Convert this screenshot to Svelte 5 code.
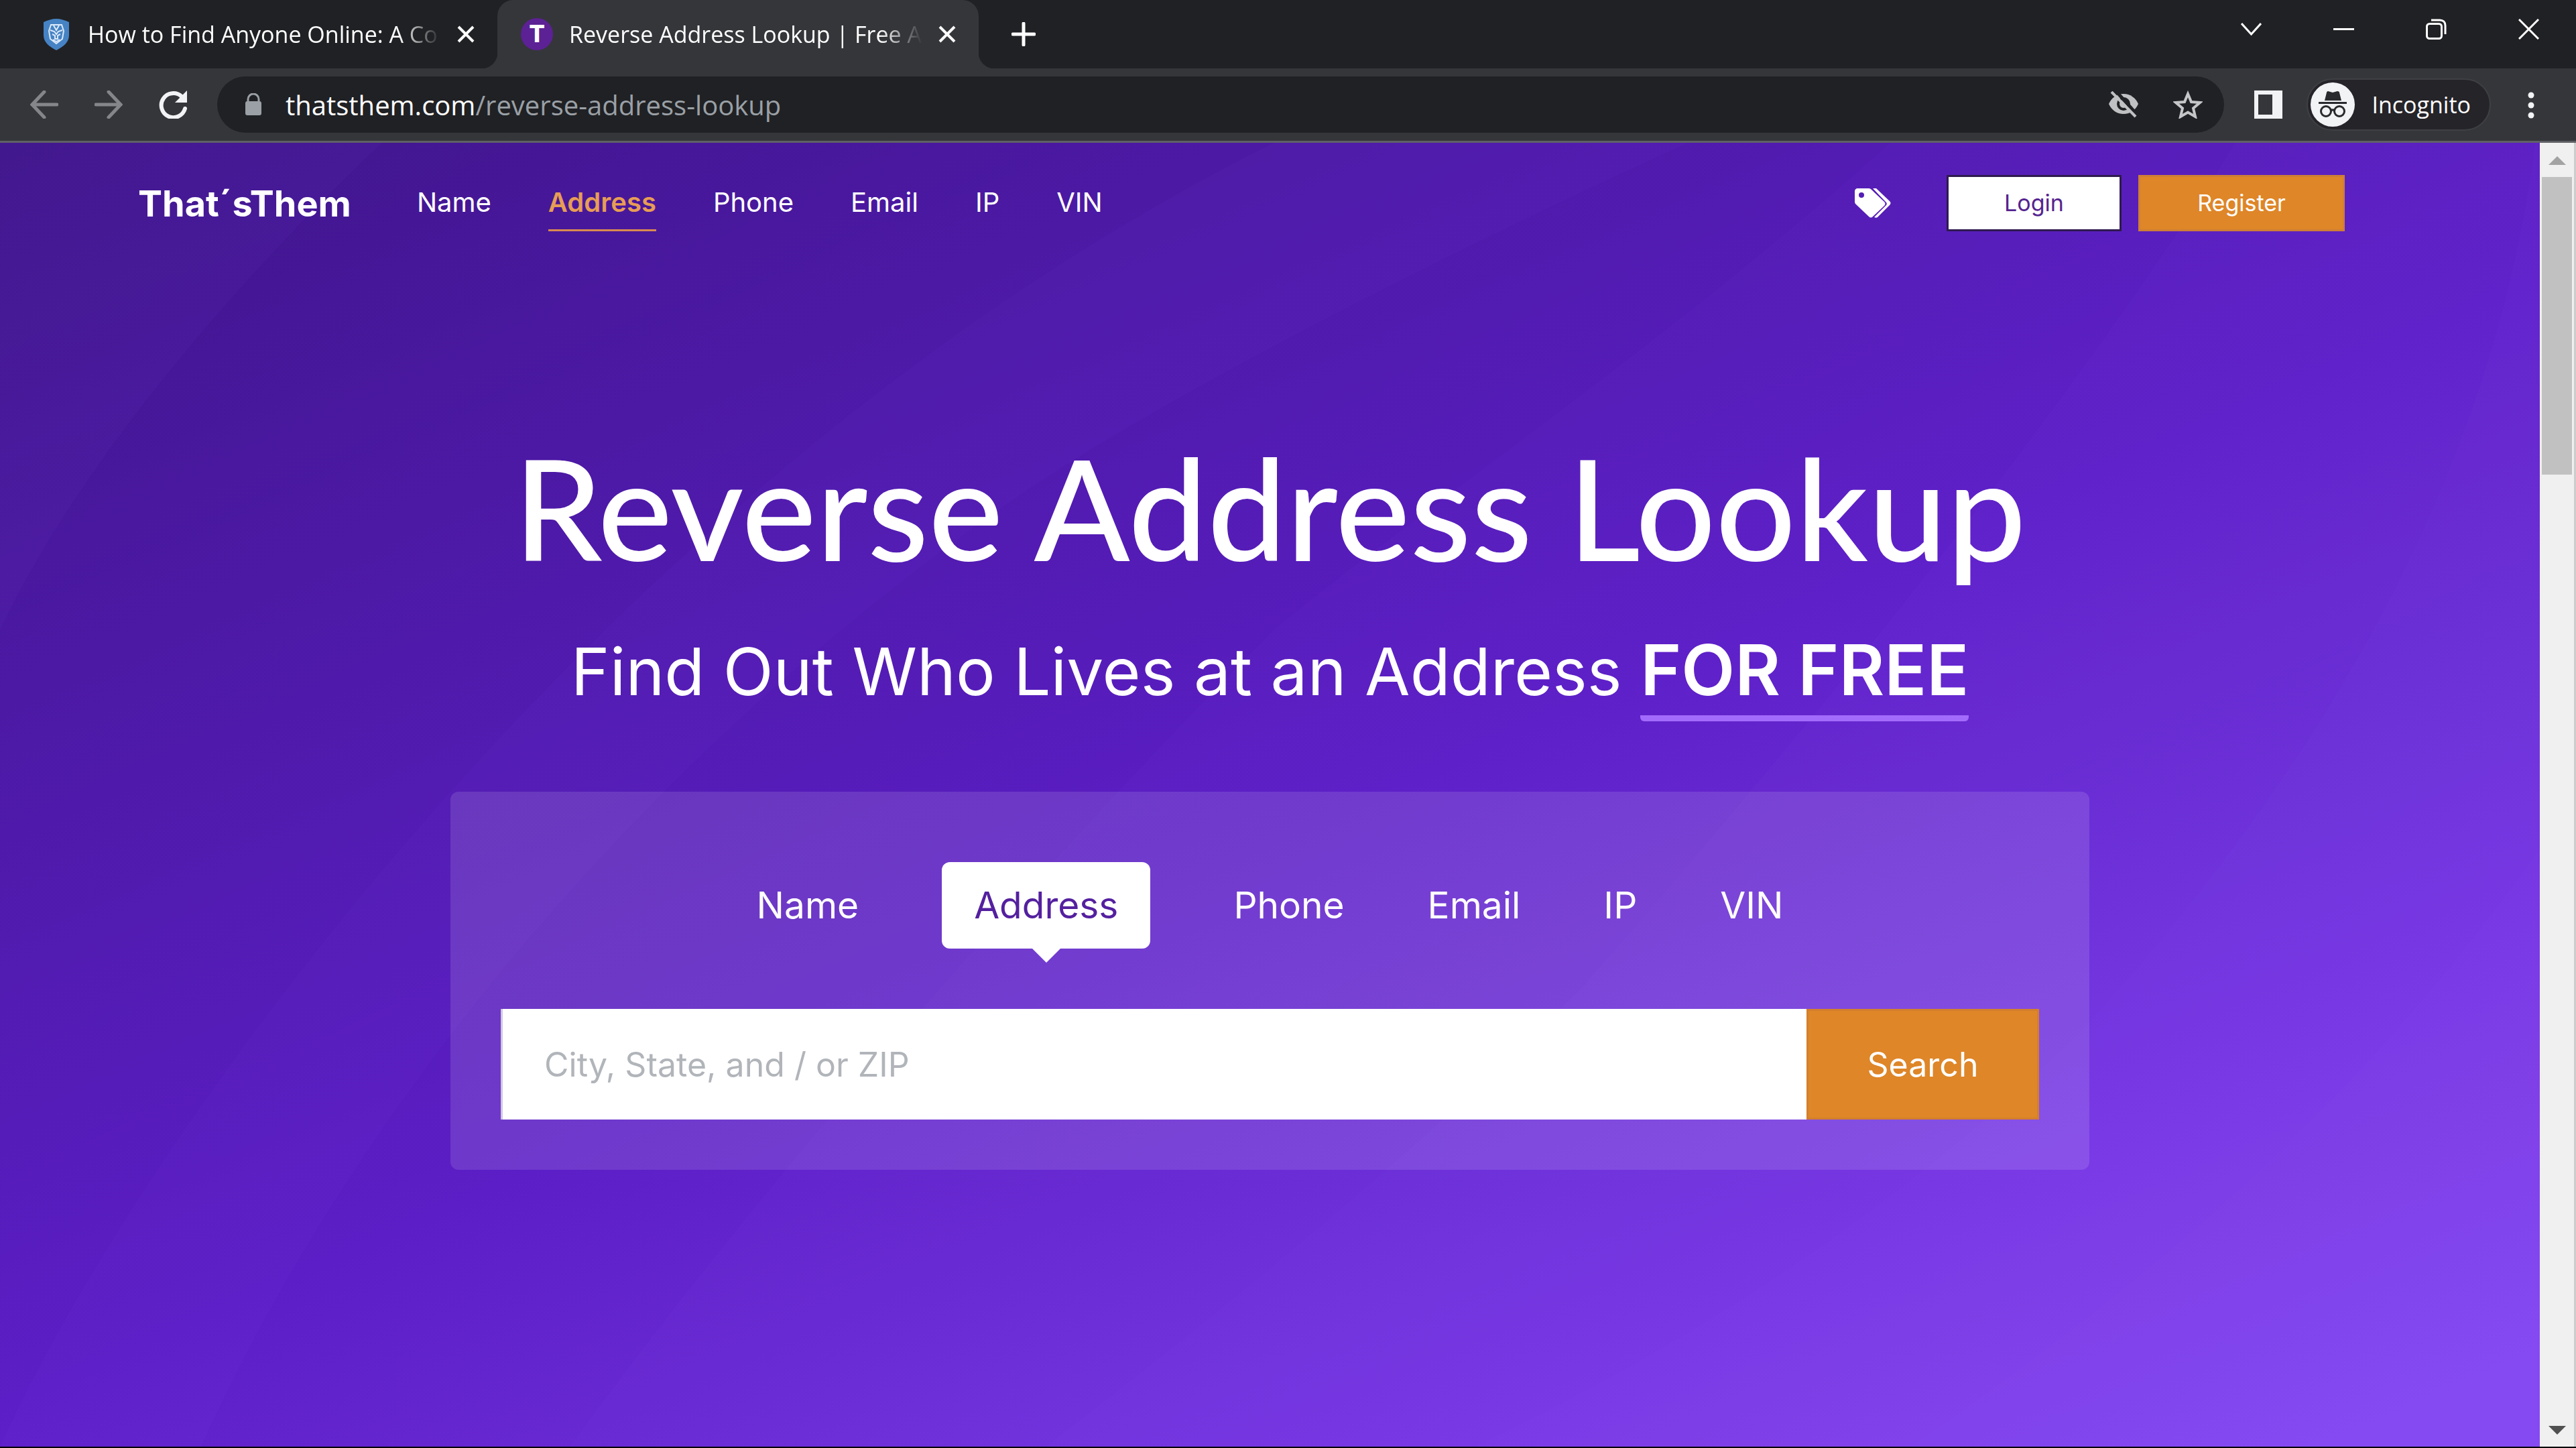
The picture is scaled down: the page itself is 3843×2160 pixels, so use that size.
<script>
  let query = "";

  const links = ["Name", "Address", "Phone", "Email", "IP", "VIN"];
  let current = "Address";
</script>

<style>
  :global(body) {
    margin: 0;
    background: #000;
  }
  button,
  input {
    margin: 0;
    padding: 0;
    border: 0;
    background: none;
    color: inherit;
    font: inherit;
  }
  svg {
    display: block;
    flex: none;
  }
  a {
    color: inherit;
    text-decoration: none;
  }

  .window {
    display: flex;
    flex-direction: column;
    box-sizing: border-box;
    min-height: 100vh;
    padding-bottom: 2px;
    color: #fff;
    font-family: "Open Sans", "Noto Sans", sans-serif;
    font-size: 34px;
  }

  /* tab strip */
  .tab-strip {
    display: flex;
    height: 102px;
    background: #202124;
  }
  .tab {
    display: flex;
    align-items: center;
    box-sizing: border-box;
    width: 718px;
    padding: 0 34px 0 35px;
  }
  .tab.first {
    width: 742px;
    padding-left: 61px;
  }
  .tab.active {
    position: relative;
    border-radius: 24px 24px 0 0;
    background: #35363a;
  }
  .tab.active::before,
  .tab.active::after {
    content: "";
    position: absolute;
    bottom: 0;
    width: 24px;
    height: 24px;
  }
  .tab.active::before {
    right: 100%;
    background: radial-gradient(circle at 0 0, #202124 24px, #35363a 25px);
  }
  .tab.active::after {
    left: 100%;
    background: radial-gradient(circle at 100% 0, #202124 24px, #35363a 25px);
  }
  .tab .title {
    flex: 1;
    margin: 0 24px;
    overflow: hidden;
    white-space: nowrap;
    line-height: 48px;
    mask-image: linear-gradient(to right, #000 88%, transparent);
  }
  .favicon {
    width: 48px;
    height: 48px;
    border-radius: 50%;
    background: #5c2194;
    font-family: Roboto, sans-serif;
    font-size: 36px;
    font-weight: 900;
    line-height: 48px;
    text-align: center;
  }
  .new-tab {
    margin-left: 49px;
  }
  .window-controls {
    display: flex;
    align-items: center;
    gap: 107px;
    margin: 0 55px 15px auto;
  }

  /* toolbar */
  .toolbar {
    display: flex;
    align-items: center;
    height: 108px;
    padding: 0 53px 0 45px;
    border-bottom: 3px solid #5f6065;
    background: #35363a;
  }
  .arrows {
    display: flex;
    gap: 54px;
  }
  .omnibox {
    display: flex;
    flex: 1;
    align-items: center;
    height: 84px;
    margin: 0 45px;
    padding: 0 32px 0 41px;
    border-radius: 42px;
    background: #202124;
    font-size: 40px;
  }
  .omnibox .url {
    flex: 1;
    margin-left: 35px;
    color: #9aa0a6;
  }
  .omnibox .url b {
    color: #fff;
    font-weight: 400;
  }
  .omnibox button + button {
    margin-left: 52px;
  }
  .incognito {
    display: flex;
    align-items: center;
    gap: 25px;
    height: 78px;
    margin: 0 46px 0 36px;
    padding: 0 28px 0 4px;
    border: 2px solid #3f4044;
    border-radius: 42px;
    background: #252429;
  }

  /* page */
  .viewport {
    display: flex;
    flex: 1;
    border-right: 3px solid #cdcdcd;
  }
  .page {
    position: relative;
    flex: 1;
    background: linear-gradient(156deg, #3f158a, #5c1ec6 52%, #8646f3 96%);
    font-family: Inter, "Open Sans", sans-serif;
  }
  .waves {
    position: absolute;
    inset: 0;
    width: 100%;
    height: 100%;
  }
  .site-header {
    position: relative;
    display: flex;
    align-items: center;
    height: 84px;
    padding: 48px 291px 0 206px;
  }
  .logo {
    margin-right: 98px;
    font-size: 54px;
    font-weight: 700;
  }
  .site-nav {
    display: flex;
    flex: 1;
    gap: 85px;
    font-size: 40px;
  }
  .site-nav a {
    line-height: 81px;
    border-bottom: 3px solid transparent;
  }
  .site-nav a.current {
    border-color: #d98a4f;
    color: #e79d55;
    font-weight: 600;
  }
  .btn {
    box-sizing: border-box;
    width: 308px;
    height: 84px;
    border: 3px solid #cf7f35;
    background: #de8628;
    font-size: 34px;
    line-height: 78px;
    text-align: center;
  }
  .btn.login {
    width: 261px;
    margin: 0 25px 0 83px;
    border-color: #2f1a4f;
    background: #fff;
    color: #54248f;
  }

  .hero {
    position: relative;
    padding: 291px 0 0;
    text-align: center;
  }
  h1 {
    margin: 0 0 63px;
    font-family: Lato, sans-serif;
    font-size: 210px;
    font-weight: 500;
    line-height: 240px;
  }
  h2 {
    margin: 0;
    font-size: 98px;
    font-weight: 400;
    line-height: 120px;
  }
  h2 strong {
    display: inline-block;
    padding-bottom: 8px;
    border-bottom: 9px solid #a36bfb;
    border-radius: 0 0 6px 6px;
    font-size: 104px;
    font-weight: 600;
  }
  .panel {
    box-sizing: border-box;
    max-width: 2445px;
    margin: 105px auto 0;
    padding: 105px 75px 75px;
    border-radius: 12px;
    background: rgba(255, 255, 255, 0.12);
  }
  .search-types {
    display: flex;
    justify-content: center;
    gap: 124px;
    font-size: 55px;
    line-height: 129px;
  }
  .search-types .current {
    position: relative;
    padding: 0 48px;
    border-radius: 12px;
    background: #fff;
    color: #54209f;
  }
  .search-types .current::after {
    content: "";
    position: absolute;
    top: 100%;
    left: 50%;
    margin-left: -21px;
    border: 21px solid transparent;
    border-top: 21px solid #fff;
    border-bottom: 0;
  }
  .search {
    display: flex;
    height: 165px;
    margin-top: 90px;
    font-size: 50px;
  }
  .search input {
    flex: 1;
    box-sizing: border-box;
    padding: 0 62px;
    border-left: 3px solid #cfc8e2;
    background: #fff;
    color: #333;
  }
  .search input::placeholder {
    color: #b1b5ba;
    opacity: 1;
  }
  .search button {
    box-sizing: border-box;
    width: 347px;
    border: 3px solid #d37f2c;
    background: #de8628;
  }

  .scrollbar {
    display: flex;
    flex-direction: column;
    align-items: center;
    width: 51px;
    background: #f0f0f0;
  }
  .scrollbar svg {
    margin: 20px 0 18px;
  }
  .scrollbar .thumb {
    width: 45px;
    height: 444px;
    background: #c1c1c1;
  }
  .scrollbar .thumb + svg {
    margin-top: auto;
  }
</style>

<div class="window">
  <div class="tab-strip">
    <div class="tab first">
      <svg width="46" height="48" viewBox="0 0 46 48">
        <path d="M23 1c6 0 13 2 19 5v20c0 10-9 17-19 22C13 43 4 36 4 26V6C10 3 17 1 23 1z" fill="#4683c4" />
        <path d="M15 10h16l3 9-2 12-9 7-9-7-2-12zM14 18l6 2 3 4 3-4 6-2M17 24l4 2v5h4v-5l4-2M19 11l4 7 4-7M18 32l5 3 5-3" fill="none" stroke="#dceafa" stroke-width="2" />
      </svg>
      <span class="title">How to Find Anyone Online: A Co</span>
      <button aria-label="Close tab">
        <svg width="26" height="26" viewBox="0 0 26 26"><path d="M2 2l22 22M24 2L2 24" stroke="#fff" stroke-width="4" /></svg>
      </button>
    </div>
    <div class="tab active">
      <span class="favicon">T</span>
      <span class="title">Reverse Address Lookup | Free A</span>
      <button aria-label="Close tab">
        <svg width="26" height="26" viewBox="0 0 26 26"><path d="M2 2l22 22M24 2L2 24" stroke="#fff" stroke-width="4" /></svg>
      </button>
    </div>
    <button class="new-tab" aria-label="New tab">
      <svg width="36" height="36" viewBox="0 0 36 36"><path d="M18 2v32M2 18h32" stroke="#fff" stroke-width="5" stroke-linecap="round" /></svg>
    </button>
    <div class="window-controls">
      <button aria-label="Search tabs">
        <svg width="31" height="31" viewBox="0 0 31 31"><path d="M1 7l14.5 16L30 7" fill="none" stroke="#fff" stroke-width="3" /></svg>
      </button>
      <button aria-label="Minimize">
        <svg width="31" height="31" viewBox="0 0 31 31"><path d="M0 15.5h31" stroke="#fff" stroke-width="3" /></svg>
      </button>
      <button aria-label="Restore">
        <svg width="31" height="31" viewBox="0 0 31 31" fill="none" stroke="#fff" stroke-width="3">
          <rect x="1.5" y="7.5" width="22" height="22" rx="4" />
          <path d="M8 2h13c5 0 8 3 8 8v13" />
        </svg>
      </button>
      <button aria-label="Close">
        <svg width="31" height="31" viewBox="0 0 31 31"><path d="M1 1l29 29M30 1L1 30" stroke="#fff" stroke-width="3" /></svg>
      </button>
    </div>
  </div>

  <div class="toolbar">
    <div class="arrows">
      <button aria-label="Back">
        <svg width="42" height="42" viewBox="0 0 42 42"><path d="M21 2L3 21l18 19M3 21h37" fill="none" stroke="#85868a" stroke-width="5" stroke-linecap="round" /></svg>
      </button>
      <button aria-label="Forward">
        <svg width="42" height="42" viewBox="0 0 42 42"><path d="M21 2l18 19-18 19M39 21H2" fill="none" stroke="#85868a" stroke-width="5" stroke-linecap="round" /></svg>
      </button>
      <button aria-label="Reload">
        <svg width="42" height="42" viewBox="0 0 42 42">
          <path d="M34 9A18 18 0 1 0 39 27" fill="none" stroke="#f1f3f4" stroke-width="6" stroke-linecap="round" />
          <path d="M42 0v18H24z" fill="#f1f3f4" />
        </svg>
      </button>
    </div>
    <div class="omnibox">
      <svg width="26" height="34" viewBox="0 0 26 34">
        <path d="M5 14V9a8 8 0 0 1 16 0v5" fill="none" stroke="#9aa0a6" stroke-width="3" />
        <rect x="1" y="12" width="24" height="21" rx="3" fill="#9aa0a6" />
      </svg>
      <span class="url"><b>thatsthem.com</b>/reverse-address-lookup</span>
      <button aria-label="Third-party cookies blocked">
        <svg width="44" height="40" viewBox="0 0 44 40">
          <path d="M22 4C12 4 4 10 0 19c4 9 12 15 22 15s18-6 22-15C40 10 32 4 22 4z" fill="#c0c1c3" />
          <circle cx="22" cy="19" r="8" fill="none" stroke="#202124" stroke-width="4" />
          <path d="M9-2l34 38" stroke="#202124" stroke-width="5" />
          <path d="M4 1l36 37" stroke="#c0c1c3" stroke-width="4" />
        </svg>
      </button>
      <button aria-label="Bookmark this tab">
        <svg width="44" height="42" viewBox="0 0 44 42"><path d="M22 5l5 12 13 1-10 8.5 3 12.5-11-6.5L11 39l3-12.5L4 18l13-1z" fill="none" stroke="#c5c6c8" stroke-width="4" /></svg>
      </button>
    </div>
    <button aria-label="Side panel">
      <svg width="42" height="42" viewBox="0 0 42 42"><path fill-rule="evenodd" d="M0 0h42v42H0zM6 6v30h21V6z" fill="#f1f3f4" /></svg>
    </button>
    <button class="incognito">
      <svg width="66" height="66" viewBox="0 0 66 66">
        <circle cx="33" cy="33" r="33" fill="#f1f3f4" />
        <path d="M26 13l7 2 7-2c2 0 3 1 3 2l3 12H21l3-12c0-1 1-2 2-2z" fill="#292a2d" />
        <path d="M12 30.5h42" stroke="#292a2d" stroke-width="3" />
        <g fill="none" stroke="#292a2d" stroke-width="3">
          <circle cx="23" cy="43" r="7.5" />
          <circle cx="43" cy="43" r="7.5" />
          <path d="M30 42c2-1.5 4-1.5 6 0" />
        </g>
      </svg>
      Incognito
    </button>
    <button aria-label="Menu">
      <svg width="28" height="42" viewBox="0 0 28 42" fill="#f1f3f4">
        <circle cx="14" cy="7" r="4.5" />
        <circle cx="14" cy="22" r="4.5" />
        <circle cx="14" cy="37" r="4.5" />
      </svg>
    </button>
  </div>

  <div class="viewport">
    <main class="page">
      <svg class="waves" viewBox="0 0 3789 1945" preserveAspectRatio="none" aria-hidden="true">
        <g fill="#9a6cff" fill-opacity="0.04">
          <path d="M570 0C400 160 130 450 0 727V0z" />
          <path d="M2518 0C2100 190 1700 400 1500 540 900 960 500 1500 300 1945H0C200 1500 900 500 1900 0z" />
          <path d="M3335 0C3150 300 2800 760 2360 1260 2154 1466 1900 1684 1560 1945H3789V0z" />
          <path d="M3782 0C3720 500 3451 950 3100 1330 2800 1620 2500 1800 2200 1945H3789V0z" />
          <path d="M3789 1054C3596 1320 3354 1600 2850 1945H3789z" />
          <path d="M2820 0C2500 290 2100 560 1900 727 1500 1130 1100 1600 850 1945H3789V0z" />
        </g>
      </svg>

      <header class="site-header">
        <a class="logo" href="/">That´sThem</a>
        <nav class="site-nav">
          {#each links as link}
            <a href="#{link.toLowerCase()}" class:current={link === "Address"}>{link}</a>
          {/each}
        </nav>
        <a href="#pricing" aria-label="Pricing">
          <svg width="54" height="44" viewBox="0 0 54 44" fill="#fff">
            <path fill-rule="evenodd" d="M4 0h17c2 0 3 1 4 2l19 18c2 2 2 4 0 6L27 42c-2 2-4 2-6 0L2 24c-1-1-2-2-2-4V4c0-2 2-4 4-4zm6 6a4 4 0 1 0 0 8 4 4 0 0 0 0-8z" />
            <path d="M27 0h5l20 19c2 2 2 4 0 6L34 43c-1 1-3 1-5 0l18-18c1-1 1-3 0-4z" />
          </svg>
        </a>
        <a class="btn login" href="#login">Login</a>
        <a class="btn" href="#register">Register</a>
      </header>

      <section class="hero">
        <h1>Reverse Address Lookup</h1>
        <h2>Find Out Who Lives at an Address <strong>FOR FREE</strong></h2>

        <div class="panel">
          <div class="search-types">
            {#each links as link}
              <button class:current={link === current} on:click={() => (current = link)}>{link}</button>
            {/each}
          </div>
          <form class="search" on:submit|preventDefault>
            <input type="text" aria-label="City, State, and / or ZIP" placeholder="City, State, and / or ZIP" bind:value={query} />
            <button type="submit">Search</button>
          </form>
        </div>
      </section>
    </main>

    <div class="scrollbar">
      <svg width="26" height="13" viewBox="0 0 26 13"><path d="M13 0l13 13H0z" fill="#a3a3a3" /></svg>
      <div class="thumb"></div>
      <svg width="26" height="13" viewBox="0 0 26 13"><path d="M0 0h26L13 13z" fill="#505050" /></svg>
    </div>
  </div>
</div>
